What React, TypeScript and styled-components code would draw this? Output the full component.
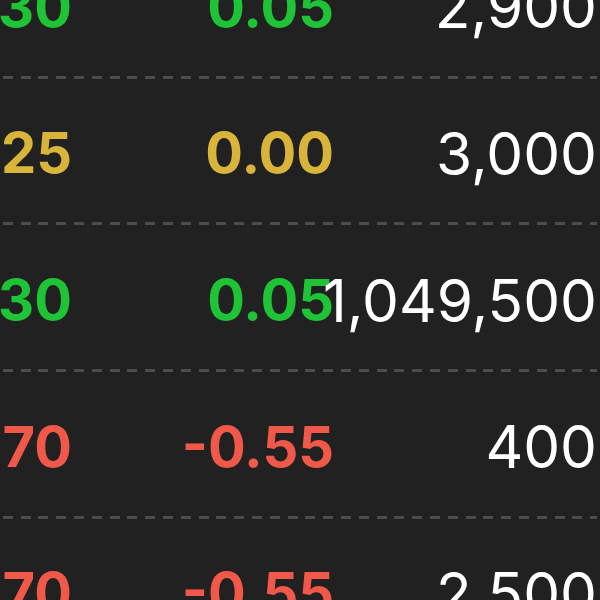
import styled, { createGlobalStyle } from "styled-components";

const GlobalStyle = createGlobalStyle`
  html, body {
    margin: 0;
    padding: 0;
    background: #212121;
    overflow: hidden;
  }
  body {
    font-family: Inter, "Liberation Sans", Arial, sans-serif;
  }
`;

type Trend = "up" | "flat" | "down";

const trendColor: Record<Trend, string> = {
  up: "#1fc436",
  flat: "#d9b43a",
  down: "#f0584a",
};

// the screenshot is a crop of a wider quote table, so the table starts left of the page
const Page = styled.div`
  width: 600px;
  height: 600px;
  overflow: hidden;
  background: #212121;
`;

const Table = styled.div`
  width: 790px;
  margin-left: -193px;
  margin-top: -68px;
  display: flex;
  flex-direction: column;
`;

const Row = styled.div`
  display: grid;
  grid-template-columns: 265px 262px 263px;
  height: 143.67px;
  align-items: center;
  padding-top: 6px;
  box-sizing: border-box;
`;

const Divider = styled.div`
  height: 3px;
  background: repeating-linear-gradient(
    to right,
    #4c4c4c 0,
    #4c4c4c 10px,
    transparent 10px,
    transparent 17.8px
  );
`;

const Cell = styled.div<{ $trend?: Trend; $bold?: boolean }>`
  display: flex;
  justify-content: flex-end;
  white-space: nowrap;
  font-size: ${(p) => (p.$bold ? "56px" : "58.5px")};
  font-weight: ${(p) => (p.$bold ? 700 : 400)};
  color: ${(p) => (p.$trend ? trendColor[p.$trend] : "#ffffff")};
`;

const quotes: { price: string; change: string; volume: string; trend: Trend }[] = [
  { price: "24.30", change: "0.05", volume: "2,900", trend: "up" },
  { price: "24.25", change: "0.00", volume: "3,000", trend: "flat" },
  { price: "24.30", change: "0.05", volume: "1,049,500", trend: "up" },
  { price: "23.70", change: "-0.55", volume: "400", trend: "down" },
  { price: "23.70", change: "-0.55", volume: "2,500", trend: "down" },
];

export default function App() {
  return (
    <Page>
      <GlobalStyle />
      <Table>
        {quotes.map((q, i) => (
          <div key={i}>
            <Row>
              <Cell $bold $trend={q.trend}>
                {q.price}
              </Cell>
              <Cell $bold $trend={q.trend}>
                {q.change}
              </Cell>
              <Cell>{q.volume}</Cell>
            </Row>
            {i < quotes.length - 1 && <Divider />}
          </div>
        ))}
      </Table>
    </Page>
  );
}
